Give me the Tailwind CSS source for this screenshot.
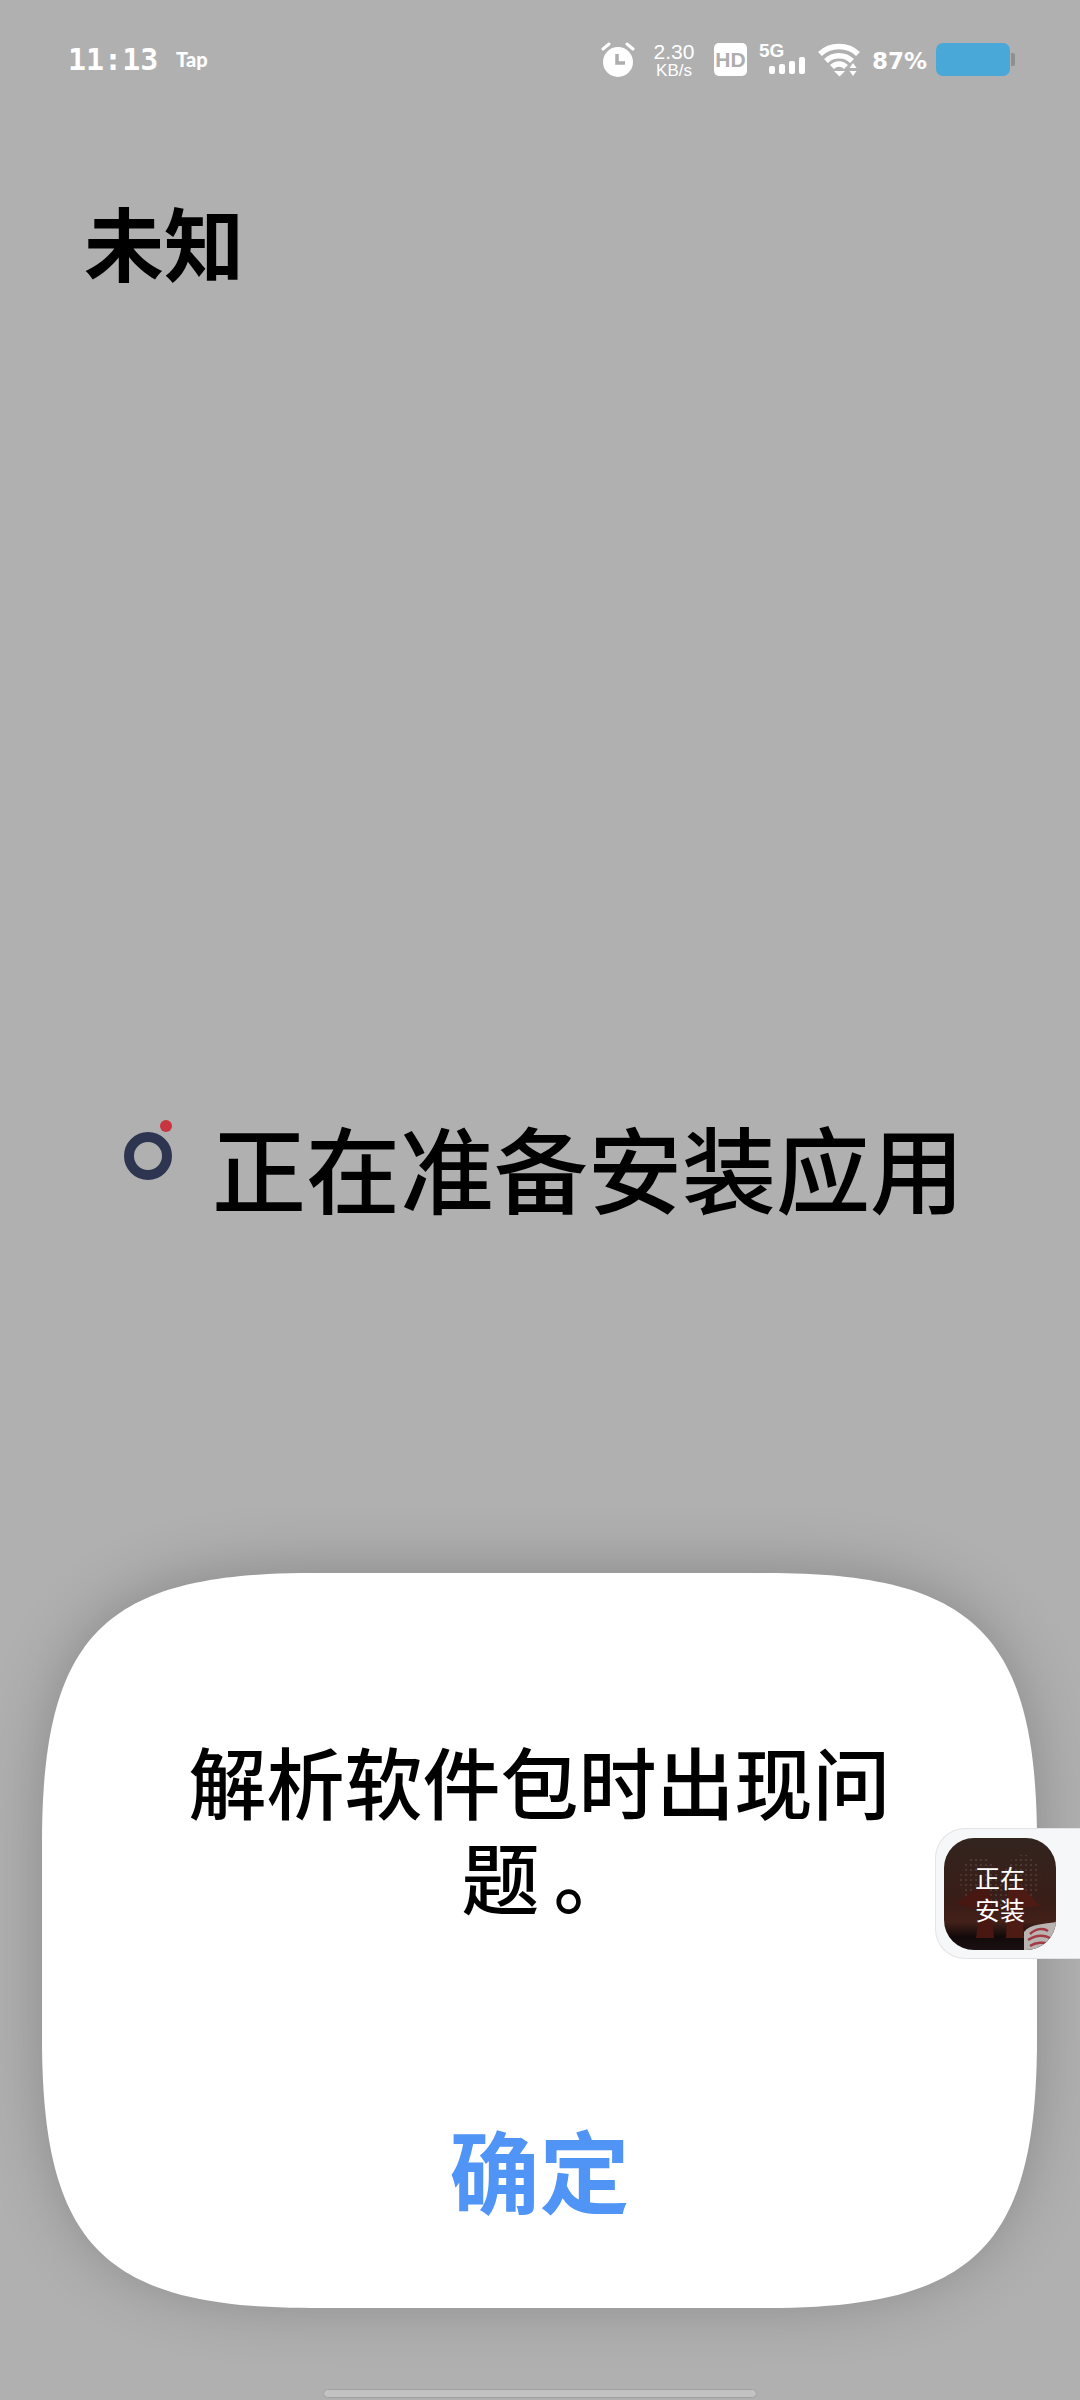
<!DOCTYPE html>
<html lang="zh-CN">
<head>
  <meta charset="UTF-8">
  <title>正在准备安装应用</title>
  <script src="https://cdn.jsdelivr.net/npm/@tailwindcss/browser@4"></script>
</head>
<body class="bg-[#b0b0b0] font-['Noto_Sans_CJK_SC',sans-serif]">
  <div class="relative w-[1080px] h-[2400px] overflow-hidden flex flex-col">

    <!-- status bar -->
    <div class="h-[120px] flex items-center pl-[68px] pb-[1px] text-white shrink-0">
      <span class="font-['DejaVu_Sans_Mono',monospace] font-bold text-[30px] w-[108px] leading-none">11:13</span>
      <span class="font-['Lato',sans-serif] font-black text-[20px] leading-none w-[425px] mb-[2px]">Tap</span>
      <svg class="w-[34px] h-[36px] mr-[19px]" viewBox="0 0 34 36" fill="#fff">
        <circle cx="17" cy="20" r="15"/>
        <path d="M2 7l6-5M32 7l-6-5" stroke="#fff" stroke-width="3" stroke-linecap="round"/>
        <path d="M16 12v9h8" fill="none" stroke="#aeaeae" stroke-width="3.500"/>
      </svg>
      <div class="w-[40px] mr-[20px] flex flex-col items-center font-['Liberation_Sans',sans-serif] leading-none">
        <span class="text-[21px] h-[21px]">2.30</span>
        <span class="text-[17px]">KB/s</span>
      </div>
      <div class="w-[33px] h-[33px] rounded-[5px] bg-white mr-[12px] flex items-center justify-center">
        <span class="font-['Liberation_Sans',sans-serif] font-bold text-[21px] text-[#aeaeae] leading-none">HD</span>
      </div>
      <div class="relative w-[46px] h-[33px] mr-[13px]">
        <span class="absolute left-0 top-[-2px] font-['Liberation_Sans',sans-serif] font-bold text-[19px] leading-none">5G</span>
        <svg class="absolute left-[10px] top-[14px] w-[36px] h-[18px]" viewBox="0 0 36 18" fill="#fff">
          <rect x="0" y="9" width="6" height="8" rx="2"/>
          <rect x="10" y="7" width="6" height="10" rx="2"/>
          <rect x="20" y="4" width="6" height="13" rx="2"/>
          <rect x="30" y="0" width="6" height="17" rx="2"/>
        </svg>
      </div>
      <svg class="w-[42px] h-[34px] mr-[12px]" viewBox="0 0 42 34" fill="none" stroke="#fff" stroke-width="5.500">
        <path d="M2 11C12 1 30 1 40 11"/>
        <path d="M8 18C15 11 27 11 34 18"/>
        <path d="M14 24C18 20 24 20 28 24" />
        <path d="M16 28h11l-5.500 5.500z" fill="#fff" stroke="none"/>
        <path d="M35 20l-3.500 5h7zM35 33l-3.500-5h7z" fill="#fff" stroke="none"/>
      </svg>
      <span class="font-['DejaVu_Sans',sans-serif] font-bold text-[23px] leading-none w-[64px] mt-[4px]">87%</span>
      <div class="w-[74px] h-[33px] rounded-[7px] bg-[#4aa8d8]"></div>
      <div class="w-[4px] h-[13px] bg-[#8f8f8f] rounded-r-[2px] ml-[1px]"></div>
    </div>

    <!-- title -->
    <h1 class="pl-[84px] mt-[74px] h-[92px] text-[80px] leading-[92px] font-bold text-black">未知</h1>

    <!-- progress row -->
    <div class="mt-[825px] h-[110px] flex items-center pl-[122px]">
      <svg class="w-[52px] h-[66px] mr-[38px] mb-[36px]" viewBox="0 0 52 66" fill="none">
        <circle cx="26" cy="41" r="19" stroke="#2d3550" stroke-width="10"/>
        <circle cx="44" cy="11" r="6" fill="#c8343f"/>
      </svg>
      <span class="text-[94px] leading-[110px] font-medium text-black whitespace-nowrap">正在准备安装应用</span>
    </div>

    <!-- dialog -->
    <div class="absolute left-[42px] top-[1573px] w-[995px] h-[735px] flex flex-col items-center">
      <svg class="absolute inset-0 w-full h-full overflow-visible drop-shadow-[0_-4px_30px_rgba(0,0,0,0.22)]" viewBox="0 0 995 735">
        <path fill="#fff" d="M270 0H725C933 0 995 62 995 270V465C995 673 933 735 725 735H270C62 735 0 673 0 465V270C0 62 62 0 270 0z"/>
      </svg>
      <div class="relative mt-[160px] w-[720px] flex flex-col items-center text-[78px] leading-[95px] font-medium text-black">
        <span class="whitespace-nowrap">解析软件包时出现问</span>
        <div class="flex gap-[14px] ml-[14px]">
          <span>题</span>
          <span>。</span>
        </div>
      </div>
      <button class="relative mt-[190px] text-[90px] leading-[110px] font-bold text-[#5095f5]">确定</button>
    </div>

    <!-- floating install tab -->
    <div class="absolute left-[935px] top-[1828px] w-[145px] h-[131px] bg-[#f6f7f9] border border-r-0 border-[#e4e4e4] rounded-l-[30px] pl-[8px] pt-[9px]">
      <div class="relative w-[112px] h-[112px] rounded-[30px] overflow-hidden">
        <svg class="absolute inset-0 w-full h-full" viewBox="0 0 112 112">
          <defs>
            <linearGradient id="iconBg" x1="0" y1="0" x2="0" y2="1">
              <stop offset="0" stop-color="#33241f"/>
              <stop offset="0.6" stop-color="#3a1d17"/>
              <stop offset="0.75" stop-color="#43211a"/>
              <stop offset="0.88" stop-color="#120a0a"/>
              <stop offset="1" stop-color="#1a1012"/>
            </linearGradient>
            <pattern id="speck" width="5" height="5" patternUnits="userSpaceOnUse">
              <circle cx="2" cy="2" r="1.100" fill="#8d8581"/>
            </pattern>
          </defs>
          <rect width="112" height="112" fill="url(#iconBg)"/>
          <path d="M56 40C46 8 18 14 16 40C15 54 24 62 34 70H78C90 60 98 50 96 34C92 10 66 10 56 40z" fill="url(#speck)" opacity="0.28"/>
          <path d="M32 100L36 72L12 66L38 46L46 54L50 100z" fill="#481712"/>
          <path d="M62 100L64 54L74 44L96 68L78 70L80 100z" fill="#4d1a14"/>
          <path d="M80 112V94C86 86 100 86 112 84V112z" fill="#b9b3b1"/>
          <path d="M86 96C92 90 100 90 104 93M84 102C92 97 100 97 106 100M86 108C92 104 100 104 104 106" fill="none" stroke="#a23a44" stroke-width="2.500"/>
        </svg>
        <div class="absolute inset-0 flex flex-col items-center justify-center pb-[3px] text-white text-[25px] leading-[32px]">
          <span>正在</span>
          <span>安装</span>
        </div>
      </div>
    </div>

    <!-- home indicator -->
    <div class="absolute left-[323px] top-[2389px] w-[434px] h-[9px] rounded-full bg-[#c2c2c2] border border-[#a0a0a0]"></div>
  </div>
</body>
</html>
